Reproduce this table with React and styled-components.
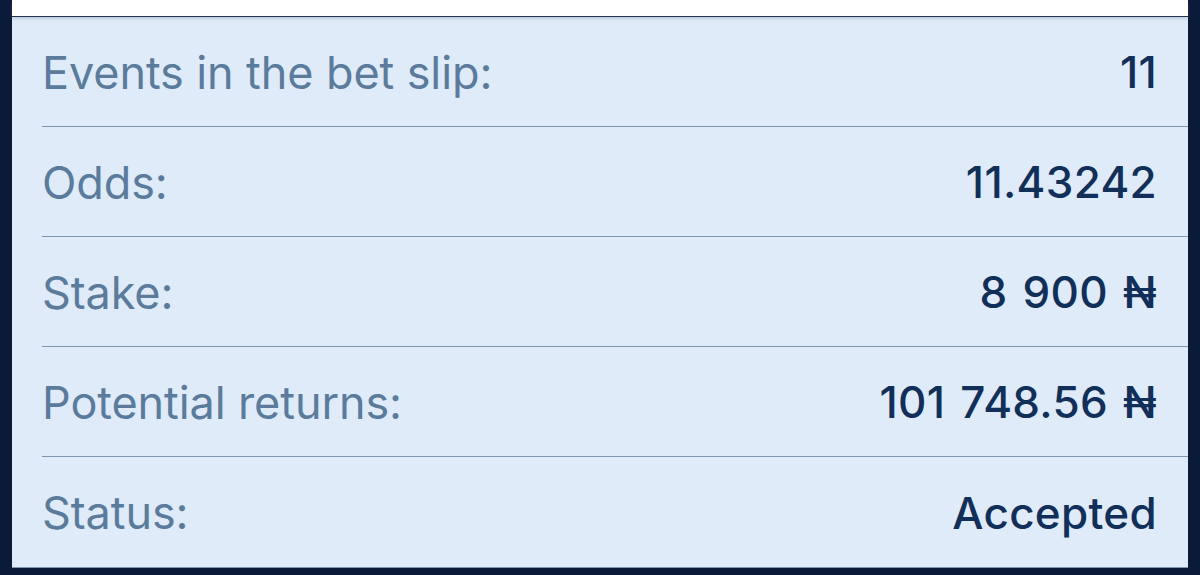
import React from 'react'
import styled, { createGlobalStyle } from 'styled-components'

const Global = createGlobalStyle`
  html, body {
    margin: 0;
    padding: 0;
    background: #0b1a38;
  }
  body {
    font-family: Inter, Roboto, "DejaVu Sans", sans-serif;
  }
`

const Screen = styled.div`
  width: 1200px;
  height: 575px;
  background: #0b1a38;
  padding: 0 12px;
  box-sizing: border-box;
  display: flex;
  flex-direction: column;
  overflow: hidden;
`

const TopCard = styled.div`
  height: 16px;
  background: #ffffff;
  box-shadow: 0 2px 3px rgba(90, 110, 140, 0.4);
  position: relative;
  z-index: 1;
`

const Panel = styled.div`
  background: #dfebf8;
  margin-top: 1px;
  padding: 0 31px 0 30px;
  border-bottom: 1px solid #7f98b6;
`

const Row = styled.div`
  height: 110px;
  display: flex;
  align-items: center;
  justify-content: space-between;
  box-sizing: border-box;
  margin-right: -31px;
  padding-right: 31px;
  border-bottom: ${p => (p.last ? 'none' : '1px solid #7e95b0')};
`

const Label = styled.span`
  font-size: 45px;
  font-weight: 400;
  color: #5b7b9c;
  letter-spacing: -0.1px;
  padding-top: 1px;
`

const Value = styled.span`
  font-size: 44px;
  font-weight: 500;
  color: #112f59;
  letter-spacing: 0.3px;
  word-spacing: 3px;
  padding-top: 1px;
`

const rows = [
  ['Events in the bet slip:', '11'],
  ['Odds:', '11.43242'],
  ['Stake:', '8 900 ₦'],
  ['Potential returns:', '101 748.56 ₦'],
  ['Status:', 'Accepted'],
]

export default function App() {
  return (
    <Screen>
      <Global />
      <TopCard />
      <Panel>
        {rows.map(([label, value], i) => (
          <Row key={label} last={i === rows.length - 1}>
            <Label>{label}</Label>
            <Value>{value}</Value>
          </Row>
        ))}
      </Panel>
    </Screen>
  )
}
